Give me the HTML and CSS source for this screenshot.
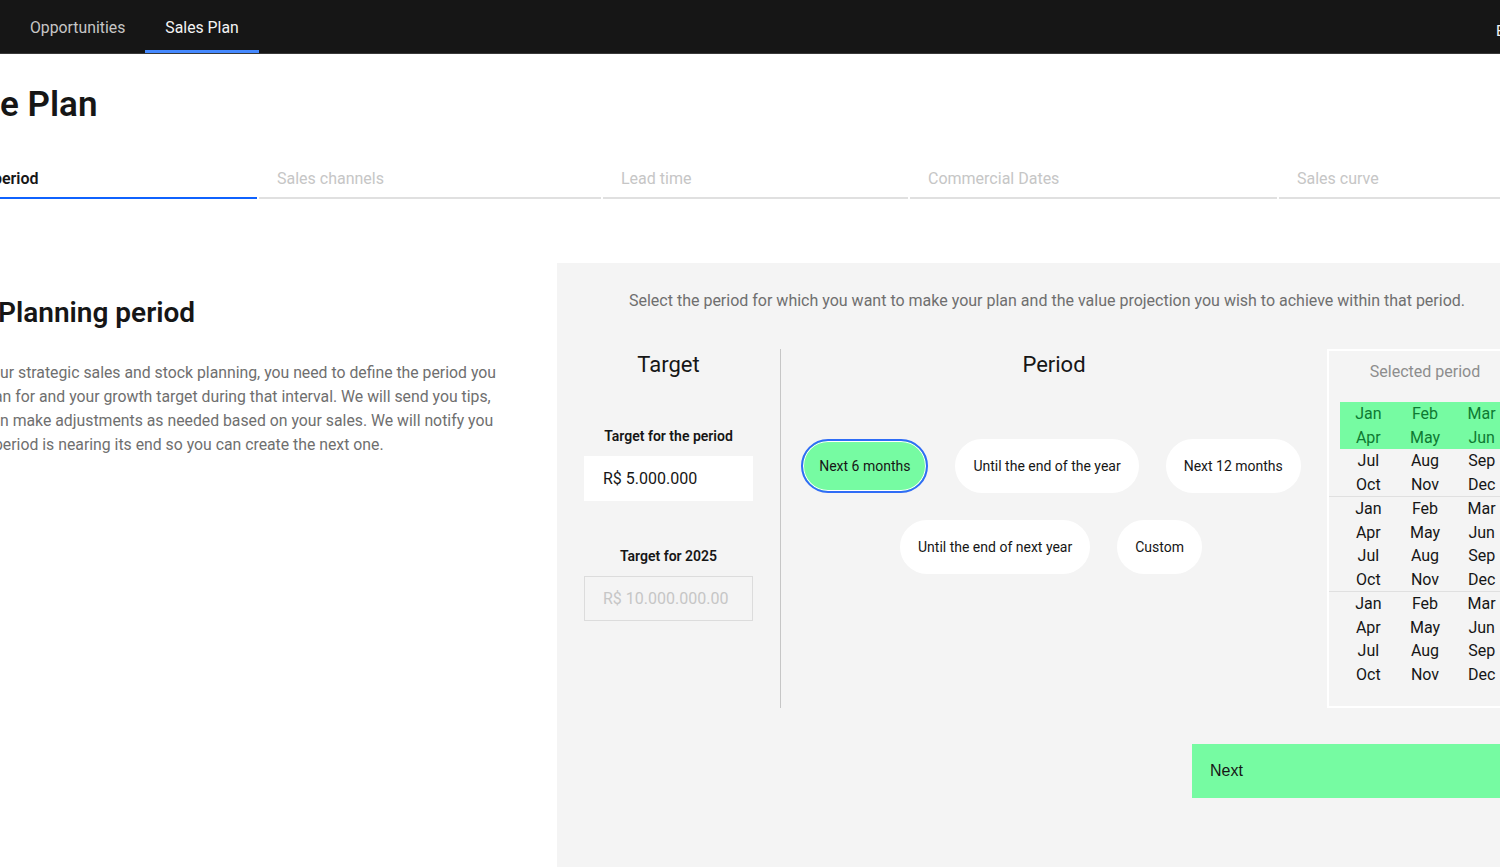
FILE: index.html
```html
<!DOCTYPE html>
<html lang="en">
<head>
<meta charset="utf-8">
<title>Sales Plan</title>
<link rel="stylesheet" href="styles.css">
</head>
<body>
<header class="topbar">
  <nav class="topnav">
    <a class="topnav-item">Opportunities</a>
    <a class="topnav-item active">Sales Plan</a>
  </nav>
  <span class="user">E</span>
</header>

<main class="page">
  <h1 class="title">e Plan</h1>

  <div class="steps">
    <div class="step active step-1"><span class="cut-word">period</span></div>
    <div class="step step-2">Sales channels</div>
    <div class="step step-3">Lead time</div>
    <div class="step step-4">Commercial Dates</div>
    <div class="step step-5">Sales curve</div>
  </div>

  <section class="content">
    <div class="intro">
      <h2 class="intro-title">Planning period</h2>
      <p class="intro-text">
        <span class="line">ur strategic sales and stock planning, you need to define the period you</span>
        <span class="line cut">an for and your growth target during that interval. We will send you tips,</span>
        <span class="line">n make adjustments as needed based on your sales. We will notify you</span>
        <span class="line cut">period is nearing its end so you can create the next one.</span>
      </p>
    </div>

    <div class="panel">
      <p class="panel-lead">Select the period for which you want to make your plan and the value projection you wish to achieve within that period.</p>

      <div class="panel-cols">
        <div class="col-target">
          <h3 class="col-title">Target</h3>
          <label class="field-label">Target for the period</label>
          <div class="input">R$ 5.000.000</div>
          <label class="field-label second">Target for 2025</label>
          <div class="input disabled">R$ 10.000.000.00</div>
        </div>

        <div class="col-period">
          <h3 class="col-title">Period</h3>
          <div class="pills">
            <div class="pill-row">
              <button class="pill selected">Next 6 months</button>
              <button class="pill">Until the end of the year</button>
              <button class="pill">Next 12 months</button>
            </div>
            <div class="pill-row">
              <button class="pill">Until the end of next year</button>
              <button class="pill">Custom</button>
            </div>
          </div>
        </div>

        <div class="col-selected">
          <div class="sel-title">Selected period</div>
          <div class="year">
            <div class="months hl"><span>Jan</span><span>Feb</span><span>Mar</span><span>Apr</span><span>May</span><span>Jun</span></div>
            <div class="months"><span>Jul</span><span>Aug</span><span>Sep</span><span>Oct</span><span>Nov</span><span>Dec</span></div>
          </div>
          <div class="year">
            <div class="months"><span>Jan</span><span>Feb</span><span>Mar</span><span>Apr</span><span>May</span><span>Jun</span><span>Jul</span><span>Aug</span><span>Sep</span><span>Oct</span><span>Nov</span><span>Dec</span></div>
          </div>
          <div class="year">
            <div class="months"><span>Jan</span><span>Feb</span><span>Mar</span><span>Apr</span><span>May</span><span>Jun</span><span>Jul</span><span>Aug</span><span>Sep</span><span>Oct</span><span>Nov</span><span>Dec</span></div>
          </div>
        </div>
      </div>

      <div class="actions">
        <button class="next">Next</button>
      </div>
    </div>
  </section>
</main>
</body>
</html>
```

FILE: styles.css
```css
* { box-sizing: border-box; }

html, body {
  margin: 0;
  padding: 0;
  width: 1500px;
  height: 867px;
  overflow: hidden;
  background: #ffffff;
  font-family: Roboto, "Noto Sans", sans-serif;
  color: #161616;
}

.topbar {
  height: 54px;
  background: #161616;
  border-bottom: 1px solid #393939;
  display: flex;
  align-items: stretch;
  justify-content: space-between;
}

.topnav {
  display: flex;
  padding-left: 10px;
}

.topnav-item {
  display: flex;
  align-items: center;
  padding: 4px 20px 0;
  font-size: 15.8px;
  color: #c6c6c6;
  border-bottom: 3px solid transparent;
  height: 53px;
}

.topnav-item.active {
  color: #f4f4f4;
  border-bottom-color: #4589ff;
}

.user {
  align-self: center;
  color: #f4f4f4;
  font-size: 15px;
  width: 4px;
  overflow: hidden;
  margin-top: 8px;
}

.page {
  display: flex;
  flex-direction: column;
}

.title {
  margin: 0;
  padding-top: 27px;
  height: 101px;
  font-size: 35px;
  font-weight: 600;
  line-height: 48px;
}

.steps {
  display: grid;
  grid-template-columns: 257px 342px 305px 367px 1fr;
  column-gap: 2px;
  height: 44px;
}

.step {
  display: flex;
  align-items: center;
  padding: 4px 18px 0;
  font-size: 16px;
  color: #c6c6c6;
  border-bottom: 2px solid #e0e0e0;
}

.step.active {
  color: #161616;
  font-weight: 600;
  border-bottom-color: #0f62fe;
  padding-left: 0;
}

.cut-word {
  margin-left: -7px;
}

.content {
  display: flex;
  margin-top: 64px;
  height: 605px;
}

.intro {
  width: 557px;
  flex: none;
  padding-top: 32px;
}

.intro-title {
  margin: 0 0 0 -2px;
  font-size: 28px;
  font-weight: 600;
  line-height: 36px;
}

.intro-text {
  margin: 30px 0 0;
  font-size: 15.8px;
  line-height: 24px;
  color: #6f6f6f;
}

.line {
  display: block;
  white-space: nowrap;
}

.line.cut {
  margin-left: -6px;
}

.panel {
  flex: none;
  width: 980px;
  background: #f4f4f4;
  display: flex;
  flex-direction: column;
}

.panel-lead {
  margin: 27px 0 0;
  text-align: center;
  font-size: 16px;
  line-height: 22px;
  color: #6f6f6f;
}

.panel-cols {
  display: flex;
  margin-top: 37px;
  height: 359px;
}

.col-target {
  width: 224px;
  border-right: 1px solid #c6c6c6;
  display: flex;
  flex-direction: column;
  align-items: center;
}

.col-title {
  margin: 0;
  padding-top: 2px;
  font-size: 22px;
  font-weight: 400;
  line-height: 28px;
  text-align: center;
}

.field-label {
  margin-top: 48px;
  font-size: 14px;
  font-weight: 600;
  line-height: 18px;
}

.field-label.second {
  margin-top: 46px;
}

.input {
  margin-top: 11px;
  width: 169px;
  height: 45px;
  background: #ffffff;
  display: flex;
  align-items: center;
  padding: 0 18px;
  font-size: 16px;
  white-space: nowrap;
  overflow: hidden;
  border: 1px solid #ffffff;
}

.input.disabled {
  margin-top: 11px;
  background: transparent;
  border-color: #dcdcdc;
  color: #c6c6c6;
}

.col-period {
  width: 546px;
  display: flex;
  flex-direction: column;
  align-items: center;
}

.pills {
  margin-top: 60px;
  display: flex;
  flex-direction: column;
  gap: 27px;
  align-items: center;
  width: 100%;
  padding-right: 6px;
}

.pill-row {
  display: flex;
  gap: 27px;
  justify-content: center;
}

.pill {
  height: 54px;
  border: 2px solid #ffffff;
  border-radius: 27px;
  background: #ffffff;
  padding: 0 16px;
  font-family: Roboto, "Noto Sans", sans-serif;
  font-size: 14px;
  color: #161616;
}

.pill.selected {
  background: #76fba2;
  border-color: #2f6cf6;
  box-shadow: inset 0 0 0 1px #ffffff;
}

.col-selected {
  width: 196px;
  border: 2px solid #ffffff;
  padding: 8px 0 19px;
  flex: none;
}

.sel-title {
  text-align: center;
  font-size: 16px;
  color: #8d8d8d;
  line-height: 26px;
  margin-bottom: 17px;
}

.year {
  border-bottom: 1px solid #e0e0e0;
  padding: 0 11px;
}

.year:last-child {
  border-bottom: none;
}

.months {
  display: grid;
  grid-template-columns: repeat(3, 1fr);
}

.months span {
  text-align: center;
  font-size: 16px;
  line-height: 23.5px;
}

.months.hl {
  background: #76fba2;
}

.months.hl span {
  color: #0e7a32;
}

.actions {
  margin-top: 36px;
  padding-left: 635px;
}

.next {
  width: 320px;
  height: 54px;
  border: none;
  background: #76fba2;
  text-align: left;
  padding: 0 18px;
  font-family: "Liberation Sans", Arial, sans-serif;
  font-size: 16px;
  color: #161616;
}
```
